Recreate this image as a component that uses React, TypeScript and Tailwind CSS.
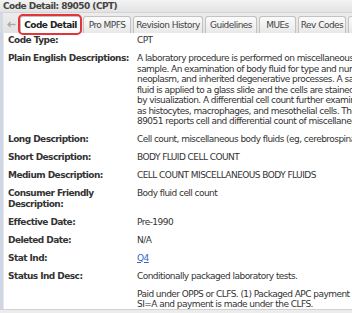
const tabs = [
  { label: "Code Detail", width: "w-[61px]", active: true },
  { label: "Pro MPFS", width: "w-[48px]", active: false },
  { label: "Revision History", width: "w-[70px]", active: false },
  { label: "Guidelines", width: "w-[52px]", active: false },
  { label: "MUEs", width: "w-[37px]", active: false },
  { label: "Rev Codes", width: "w-[48px]", active: false },
  { label: "Modifiers", width: "w-[50px]", active: false },
];

const plainEnglish = [
  "A laboratory procedure is performed on miscellaneous body fluid",
  "sample. An examination of body fluid for type and number of cells",
  "neoplasm, and inherited degenerative processes. A sample of body",
  "fluid is applied to a glass slide and the cells are stained and counted",
  "by visualization. A differential cell count further examines cells such",
  "as histocytes, macrophages, and mesothelial cells. The code",
  "89051 reports cell and differential count of miscellaneous body fluid.",
];

function Row({ label, children }: { label: React.ReactNode; children: React.ReactNode }) {
  return (
    <div className="grid grid-cols-[129px_1fr]">
      <div className="font-bold pr-2">{label}</div>
      <div className="whitespace-nowrap">{children}</div>
    </div>
  );
}

export default function App() {
  return (
    <div className="w-[352px] h-[313px] overflow-hidden bg-white flex flex-col font-['DejaVu_Sans',sans-serif] text-[9px] leading-[10.5px] tracking-[-0.55px] text-[#333]">
      {/* title */}
      <div className="h-[13px] shrink-0 px-[3px] flex items-center font-bold text-[#444] bg-gradient-to-b from-[#f3f3f3] to-[#e3e3e3] border-b border-[#d4d4d4]">
        Code Detail: 89050 (CPT)
      </div>

      {/* tabs */}
      <div className="h-[20px] shrink-0 flex items-end bg-gradient-to-b from-[#ececec] to-[#e2e2e2] border-l-[3px] border-[#d3dae4]">
        <div className="w-[17px] h-full flex items-center justify-center shrink-0">
          <svg width="9" height="7" viewBox="0 0 9 7" className="mt-[2px]">
            <path d="M8.5 3.5H1.5M3.5 1L1 3.5L3.5 6" stroke="#aaa" strokeWidth="1.3" fill="none" />
          </svg>
        </div>
        <div className="flex gap-[2px] items-end">
          {tabs.map((t) => (
            <div
              key={t.label}
              className={`relative shrink-0 h-[17px] ${t.width} flex items-center justify-center rounded-t-[3px] border border-b-0 border-[#c2c2c2] whitespace-nowrap ${
                t.active
                  ? "bg-white font-bold text-[#222]"
                  : "bg-gradient-to-b from-[#fbfbfb] to-[#e8e8e8] text-[#444]"
              }`}
            >
              {t.label}
              {t.active && (
                <span className="absolute -left-[3px] -right-[2px] -top-[3px] -bottom-[2px] border-2 border-[#e2353a] rounded-[5px]" />
              )}
            </div>
          ))}
        </div>
      </div>

      {/* content */}
      <div className="flex-1 flex min-h-0">
        <div className="w-[3px] shrink-0 bg-[#cdd6e2]" />
        <div className="w-px shrink-0 bg-[#e4e7eb]" />
        <div className="flex-1 min-w-0 overflow-hidden pl-[4px] pt-[2px] flex flex-col gap-[7.5px]">
          <Row label="Code Type:">CPT</Row>
          <Row label="Plain English Descriptions:">
            {plainEnglish.map((line) => (
              <div key={line}>{line}</div>
            ))}
          </Row>
          <Row label="Long Description:">
            Cell count, miscellaneous body fluids (eg, cerebrospinal fluid, joint fluid)
          </Row>
          <Row label="Short Description:">BODY FLUID CELL COUNT</Row>
          <Row label="Medium Description:">CELL COUNT MISCELLANEOUS BODY FLUIDS</Row>
          <Row
            label={
              <>
                Consumer Friendly
                <br />
                Description:
              </>
            }
          >
            Body fluid cell count
          </Row>
          <Row label="Effective Date:">Pre-1990</Row>
          <Row label="Deleted Date:">N/A</Row>
          <Row label="Stat Ind:">
            <span className="text-[#3366cc] underline">Q4</span>
          </Row>
          <Row label="Status Ind Desc:">
            <div>Conditionally packaged laboratory tests.</div>
            <div className="mt-[7.5px]">Paid under OPPS or CLFS. (1) Packaged APC payment if billed on the same claim</div>
            <div>SI=A and payment is made under the CLFS.</div>
          </Row>
        </div>
      </div>

      {/* bottom bar */}
      <div className="h-[4px] shrink-0 bg-[#ececec] border-t border-[#d2d2d2]" />
    </div>
  );
}
